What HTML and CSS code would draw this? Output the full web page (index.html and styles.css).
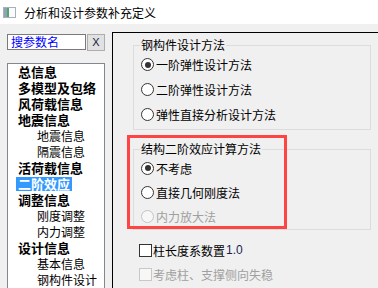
FILE: index.html
```html
<!DOCTYPE html>
<html lang="zh">
<head>
<meta charset="utf-8">
<title>分析和设计参数补充定义</title>
<link rel="stylesheet" href="styles.css">
</head>
<body>
<div class="titlebar">
  <svg class="appicon" width="13" height="11" viewBox="0 0 13 11">
    <rect x="0.5" y="0.5" width="12" height="10" fill="#eef0f2" stroke="#a8b0b8"/>
    <rect x="1" y="1" width="3" height="9" fill="#8ea4b6"/>
    <rect x="4" y="1" width="2" height="9" fill="#4fa86a"/>
    <rect x="6" y="1" width="6" height="9" fill="#fbfbfb"/>
  </svg>
  <span class="title">分析和设计参数补充定义</span>
</div>
<div class="main">
  <div class="side">
    <div class="search">
      <div class="search-input">搜参数名</div>
      <div class="search-btn">X</div>
    </div>
    <ul class="tree">
      <li class="lvl1">总信息</li>
      <li class="lvl1">多模型及包络</li>
      <li class="lvl1">风荷载信息</li>
      <li class="lvl1">地震信息</li>
      <li class="lvl2">地震信息</li>
      <li class="lvl2">隔震信息</li>
      <li class="lvl1">活荷载信息</li>
      <li class="lvl1"><span class="selected">二阶效应</span></li>
      <li class="lvl1">调整信息</li>
      <li class="lvl2">刚度调整</li>
      <li class="lvl2">内力调整</li>
      <li class="lvl1">设计信息</li>
      <li class="lvl2">基本信息</li>
      <li class="lvl2">钢构件设计</li>
    </ul>
  </div>
  <div class="panel">
    <fieldset class="group g1">
      <legend>钢构件设计方法</legend>
      <div class="opt r25"><span class="radio checked"></span>一阶弹性设计方法</div>
      <div class="opt r25"><span class="radio"></span>二阶弹性设计方法</div>
      <div class="opt r25"><span class="radio"></span>弹性直接分析设计方法</div>
    </fieldset>
    <fieldset class="group g2">
      <legend>结构二阶效应计算方法</legend>
      <div class="opt r24"><span class="radio checked"></span>不考虑</div>
      <div class="opt r24"><span class="radio"></span>直接几何刚度法</div>
      <div class="opt r24 disabled"><span class="radio"></span>内力放大法</div>
    </fieldset>
    <div class="checks">
      <div class="chk"><span class="box"></span>柱长度系数置<span class="num">1.0</span></div>
      <div class="chk disabled"><span class="box"></span>考虑柱、支撑侧向失稳</div>
    </div>
  </div>
</div>
<div class="annot"></div>
</body>
</html>
```

FILE: styles.css
```css
* { box-sizing: border-box; }
html, body { margin: 0; padding: 0; }
body {
  width: 378px;
  height: 288px;
  overflow: hidden;
  background: #f0f0f0;
  font-family: "Noto Sans CJK SC", "Noto Sans", sans-serif;
  font-size: 12px;
  color: #000;
}
.titlebar {
  height: 24px;
  background: #fff;
  display: flex;
  align-items: center;
  padding: 1px 0 0 3px;
}
.appicon { display: block; margin-right: 8px; }
.title { font-size: 12px; line-height: 16px; }

.main {
  display: flex;
  align-items: flex-start;
  margin-top: 8px;
}
.side {
  width: 105px;
  padding: 2px 0 0 7px;
  flex: none;
}
.search { display: flex; align-items: flex-start; }
.search-input {
  width: 79px;
  height: 16px;
  border: 1px solid #7a7a7a;
  background: #fff;
  color: #0000ff;
  font-size: 12px;
  line-height: 14px;
  padding-left: 3px;
}
.search-btn {
  width: 18px;
  height: 17px;
  margin-left: 1px;
  border: 1px solid #adadad;
  background: #e1e1e1;
  font-family: "Liberation Sans", sans-serif;
  font-size: 11px;
  line-height: 15px;
  text-align: center;
  color: #1a1a3a;
}
.tree {
  list-style: none;
  margin: 12px 0 0 0;
  padding: 0 0 0 10px;
  width: 98px;
  height: 225px;
  border: 1px solid #828790;
  border-bottom: none;
  background: #fff;
  overflow: hidden;
}
.tree li {
  height: 16px;
  line-height: 16px;
  white-space: nowrap;
}
.lvl1 { font-weight: 700; font-size: 13px; }
.lvl2 { font-size: 12px; padding-left: 19px; }
.selected {
  display: inline-block;
  background: #3399ff;
  color: #fff;
  line-height: 14px;
  padding: 0 2px;
  margin-left: -2px;
}

.panel {
  margin-left: 7px;
  width: 266px;
  height: 256px;
  border: 1px solid #000;
  border-right: none;
  border-bottom: none;
  padding-top: 5px;
  flex: none;
}
.group {
  margin: 0 0 0 20px;
  padding: 0 0 2px 0;
  width: 238px;
  border: 1px solid #dcdcdc;
  min-inline-size: 0;
}
.group legend {
  margin-left: 6px;
  padding: 0 1px;
  font-size: 12px;
  line-height: 14px;
}
.g2 { margin-top: 12px; padding-bottom: 1px; }
.opt {
  display: flex;
  align-items: center;
  gap: 2px;
  padding-left: 7px;
  font-size: 12px;
  white-space: nowrap;
}
.r25 { height: 25px; }
.r24 { height: 24px; }
.radio {
  width: 13px;
  height: 13px;
  border: 1px solid #333;
  border-radius: 50%;
  background: #fff;
  display: flex;
  align-items: center;
  justify-content: center;
  flex: none;
}
.radio.checked::after {
  content: "";
  width: 6px;
  height: 6px;
  border-radius: 50%;
  background: #333;
}
.disabled { color: #a0a0a0; }
.disabled .radio { border-color: #c4c4c4; background: #f7f7f7; }

.checks { margin-top: 8px; padding-left: 26px; }
.chk {
  height: 24px;
  display: flex;
  align-items: center;
  gap: 1px;
  font-size: 12px;
  white-space: nowrap;
}
.box {
  width: 13px;
  height: 13px;
  border: 1px solid #333;
  background: #fff;
  flex: none;
}
.chk.disabled .box { border-color: #c8c8c8; background: #f7f7f7; }
.num { font-family: "Liberation Sans", sans-serif; color: #1c1c50; }

.annot {
  position: absolute;
  left: 127px;
  top: 135px;
  width: 160px;
  height: 94px;
  border: 3px solid #ff4444;
}
```
